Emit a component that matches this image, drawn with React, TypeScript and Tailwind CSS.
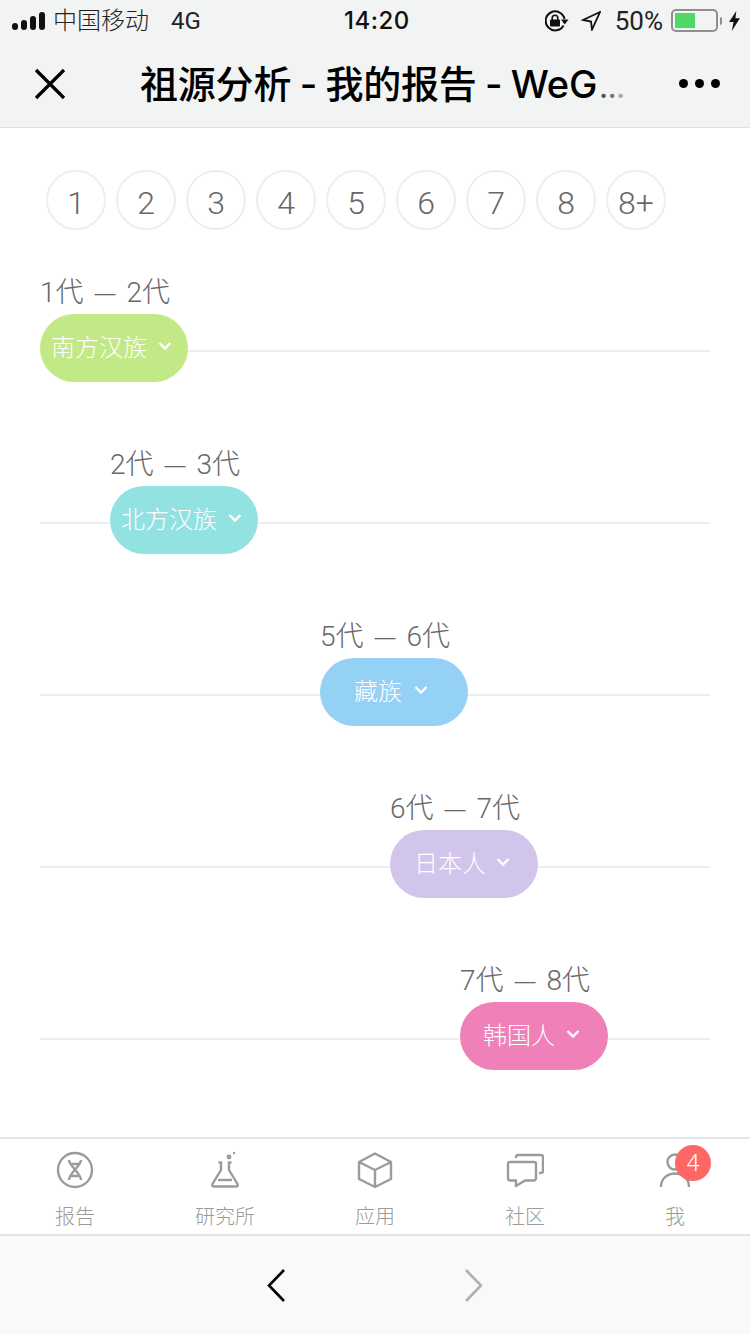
import React from "react";

const FONT = "font-['Inter','Noto_Sans_CJK_SC',sans-serif]";
const LIGHT = "font-['Roboto','Noto_Sans_CJK_SC',sans-serif] font-light";

function Chevron() {
  return (
    <svg width="14" height="10" viewBox="0 0 14 10" fill="none" stroke="#fff" strokeWidth="2.4">
      <path d="M1.5 2 L7 7.5 L12.5 2" />
    </svg>
  );
}

const rows = [
  { label1: "1代", label2: "2代", name: "南方汉族", bg: "bg-[#c2e985]", ml: "ml-0", textW: "ml-[11px]", gap: "ml-[11px]" },
  { label1: "2代", label2: "3代", name: "北方汉族", bg: "bg-[#92e2e2]", ml: "ml-[70px]", textW: "ml-[11px]", gap: "ml-[11px]" },
  { label1: "5代", label2: "6代", name: "藏族", bg: "bg-[#95d0f5]", ml: "ml-[280px]", textW: "ml-[34px]", gap: "ml-[12px]" },
  { label1: "6代", label2: "7代", name: "日本人", bg: "bg-[#d2c5ec]", ml: "ml-[350px]", textW: "ml-[24px]", gap: "ml-[10px]" },
  { label1: "7代", label2: "8代", name: "韩国人", bg: "bg-[#ef80b8]", ml: "ml-[420px]", textW: "ml-[23px]", gap: "ml-[11px]" },
];

function Row({ r }: { r: (typeof rows)[number] }) {
  return (
    <div className="relative h-[172px] w-[670px]">
      <div className="absolute left-0 right-0 top-[73px] h-[2px] bg-[#eceff2]" />
      <div className={`relative ${r.ml} w-[148px]`}>
        <div className={`${LIGHT} flex h-[32px] items-center whitespace-nowrap text-[28px] leading-none text-[#686868]`}>
          <span>{r.label1}</span>
          <span className="ml-[11px] font-['Liberation_Sans',sans-serif] text-[21px]">—</span>
          <span className="ml-[11px]">{r.label2}</span>
        </div>
        <div className={`${r.bg} mt-[5px] flex h-[68px] w-[148px] items-center rounded-full`}>
          <span className={`${LIGHT} ${r.textW} whitespace-nowrap text-[24px] leading-none text-white`}>{r.name}</span>
          <span className={`${r.gap} -mt-[3px] flex`}><Chevron /></span>
        </div>
      </div>
    </div>
  );
}

const tabs = [
  {
    name: "报告",
    icon: (
      <svg width="38" height="38" viewBox="0 0 38 38" fill="none" stroke="#9b9b9b" strokeWidth="2.4">
        <circle cx="19" cy="19" r="17" />
        <path d="M13 9 C13 15 25 22 25 29 M25 9 C25 15 13 22 13 29 M14 13 H24 M14 25 H24" />
      </svg>
    ),
  },
  {
    name: "研究所",
    icon: (
      <svg width="38" height="38" viewBox="0 0 38 38" fill="none" stroke="#9b9b9b" strokeWidth="2.4">
        <path d="M12.5 11.5 H15 V19 L6.5 33 Q5.5 35.5 8 35.5 H30 Q32.5 35.5 31.5 33 L23 19 V11.5 H25.5" />
        <path d="M12 29 H26" />
        <circle cx="23" cy="6" r="2.4" fill="#9b9b9b" stroke="none" />
        <circle cx="28" cy="2" r="1.2" fill="#9b9b9b" stroke="none" />
      </svg>
    ),
  },
  {
    name: "应用",
    icon: (
      <svg width="38" height="38" viewBox="0 0 38 38" fill="none" stroke="#9b9b9b" strokeWidth="2.4" strokeLinejoin="round">
        <path d="M19 2.5 L35 11 V28 L19 36 L3 28 V11 Z M3 11 L19 19 L35 11 M19 19 V36" />
      </svg>
    ),
  },
  {
    name: "社区",
    icon: (
      <svg width="38" height="38" viewBox="0 0 38 38" fill="none" stroke="#9b9b9b" strokeWidth="2.4" strokeLinejoin="round">
        <path d="M2 13 Q2 11 4 11 H28 Q30 11 30 13 V27 Q30 29.5 27 29.5 H19 L10 35 V29.5 H4 Q2 29.5 2 27 Z" />
        <path d="M10 7 V6 Q10 4 12 4 H35 Q37 4 37 6 V20 Q37 22 35 22 H33" />
      </svg>
    ),
  },
];

export default function App() {
  return (
    <div className={`${FONT} flex h-[1334px] w-[750px] flex-col overflow-hidden bg-white`}>
      {/* Header */}
      <div className="flex h-[128px] flex-col border-b border-[#dfdfdf] bg-[#f2f3f3]">
        <div className="flex h-[41px] items-center pl-[12px] pr-[10px] text-[#1a1a1a]">
          <div className="flex w-[332px] items-center pt-[1px]">
            <svg width="34" height="20" viewBox="0 0 34 20" fill="#111">
              <rect x="0" y="12" width="6" height="7" rx="3" />
              <rect x="9" y="9" width="6" height="10" rx="3" />
              <rect x="18" y="5" width="6" height="14" rx="3" />
              <rect x="27" y="1" width="6" height="18" rx="3" />
            </svg>
            <span className="ml-[7px] text-[24px] leading-none text-[#222] font-['Roboto','Noto_Sans_CJK_SC',sans-serif] font-light">中国移动</span>
            <span className="ml-[22px] text-[24px] leading-none text-[#222] font-['Roboto',sans-serif]">4G</span>
          </div>
          <div className="text-[24px] font-medium leading-[26px] tracking-[0.5px] text-[#111]">14:20</div>
          <div className="ml-auto flex items-center">
            <svg width="24" height="22" viewBox="0 0 24 22" fill="none" stroke="#111" strokeWidth="2">
              <path d="M18.5 15.5 A9.5 9.5 0 1 1 19.5 9" />
              <path d="M16 9.5 L23.5 9.5 L19.7 14.5 Z" fill="#111" stroke="none" />
              <rect x="5" y="9.5" width="10" height="7" rx="1" fill="#111" stroke="none" />
              <path d="M7.2 10 V8 A2.8 2.8 0 0 1 12.8 8 V10" strokeWidth="1.6" />
            </svg>
            <svg className="ml-[12px]" width="20" height="20" viewBox="0 0 20 20" fill="none" stroke="#111" strokeWidth="1.8" strokeLinejoin="miter">
              <path d="M19 1 L2 9 L10 10.5 L11 18.5 Z" />
            </svg>
            <span className="ml-[14px] text-[26px] leading-none text-[#222] font-['Roboto',sans-serif]">50%</span>
            <div className="ml-[8px] flex h-[23px] w-[47px] items-center rounded-[5px] border-2 border-[#8f8f8f] p-[2px]">
              <div className="h-full w-[20px] bg-[#4cd964]" />
            </div>
            <div className="ml-[2px] h-[8px] w-[2px] rounded-r-sm bg-[#8f8f8f]" />
            <svg className="ml-[7px]" width="11" height="20" viewBox="0 0 12 22" fill="#111">
              <path d="M8 0 L0 12 H5 L3 22 L12 8 H7 Z" />
            </svg>
          </div>
        </div>
        <div className="flex flex-1 items-center pl-[34px] pr-[30px]">
          <svg width="32" height="32" viewBox="0 0 32 32" fill="none" stroke="#000" strokeWidth="3.2">
            <path d="M2 2 L30 30 M30 2 L2 30" />
          </svg>
          <div className="ml-[74px] flex items-baseline whitespace-nowrap text-[38px] font-medium leading-none tracking-[-0.2px] [word-spacing:-1.5px] text-[#000]">
            <span>祖源分析 - 我的报告 - WeG</span>
            <span className="ml-[2px] text-[26px] font-bold leading-none">
              <span className="text-[#555]">.</span>
              <span className="text-[#777]">.</span>
              <span className="text-[#aaa]">.</span>
            </span>
          </div>
          <div className="ml-auto flex gap-[7px]">
            <div className="h-[9px] w-[9px] rounded-full bg-[#000]" />
            <div className="h-[9px] w-[9px] rounded-full bg-[#000]" />
            <div className="h-[9px] w-[9px] rounded-full bg-[#000]" />
          </div>
        </div>
      </div>

      {/* Main */}
      <div className="flex-1 px-[40px] pt-[42px]">
        <div className="flex gap-[10px] pl-[6px]">
          {["1", "2", "3", "4", "5", "6", "7", "8", "8+"].map((n) => (
            <div
              key={n}
              className={`${LIGHT} flex h-[60px] w-[60px] items-center justify-center rounded-full border-2 border-[#eceff2] pt-[6px] text-[32px] leading-none text-[#686868]`}
            >
              {n}
            </div>
          ))}
        </div>
        <div className="mt-[47px] flex flex-col">
          {rows.map((r) => (
            <Row key={r.name} r={r} />
          ))}
        </div>
      </div>

      {/* Tabs */}
      <div className="flex h-[100px] border-b-2 border-t-2 border-b-[#e4e4e4] border-t-[#e2e6e9] bg-white">
        {tabs.map((t) => (
          <div key={t.name} className="flex w-[150px] flex-col items-center pt-[12px]">
            {t.icon}
            <span className={`${LIGHT} mt-[18px] text-[20px] leading-none text-[#9b9b9b]`}>{t.name}</span>
          </div>
        ))}
        <div className="relative flex w-[150px] flex-col items-center pt-[12px]">
          <svg width="38" height="38" viewBox="0 0 38 38" fill="none" stroke="#9b9b9b" strokeWidth="2.4">
            <circle cx="19" cy="11" r="7.5" />
            <path d="M5 36 C5 18 33 18 33 36" />
          </svg>
          <span className={`${LIGHT} mt-[18px] text-[20px] leading-none text-[#9b9b9b]`}>我</span>
          <div className={`${LIGHT} absolute left-[75px] top-[6px] flex h-[36px] w-[36px] items-center justify-center rounded-full bg-[#ff6666] text-[24px] leading-none text-white`}>
            4
          </div>
        </div>
      </div>

      {/* Browser toolbar */}
      <div className="flex h-[98px] items-center justify-center gap-[180px] bg-[#f9f9fb]">
        <svg width="18" height="33" viewBox="0 0 18 33" fill="none" stroke="#000" strokeWidth="2.6">
          <path d="M17 1 L2 16.5 L17 32" />
        </svg>
        <svg width="18" height="33" viewBox="0 0 18 33" fill="none" stroke="#b0b0b0" strokeWidth="2.6">
          <path d="M1 1 L16 16.5 L1 32" />
        </svg>
      </div>
    </div>
  );
}
